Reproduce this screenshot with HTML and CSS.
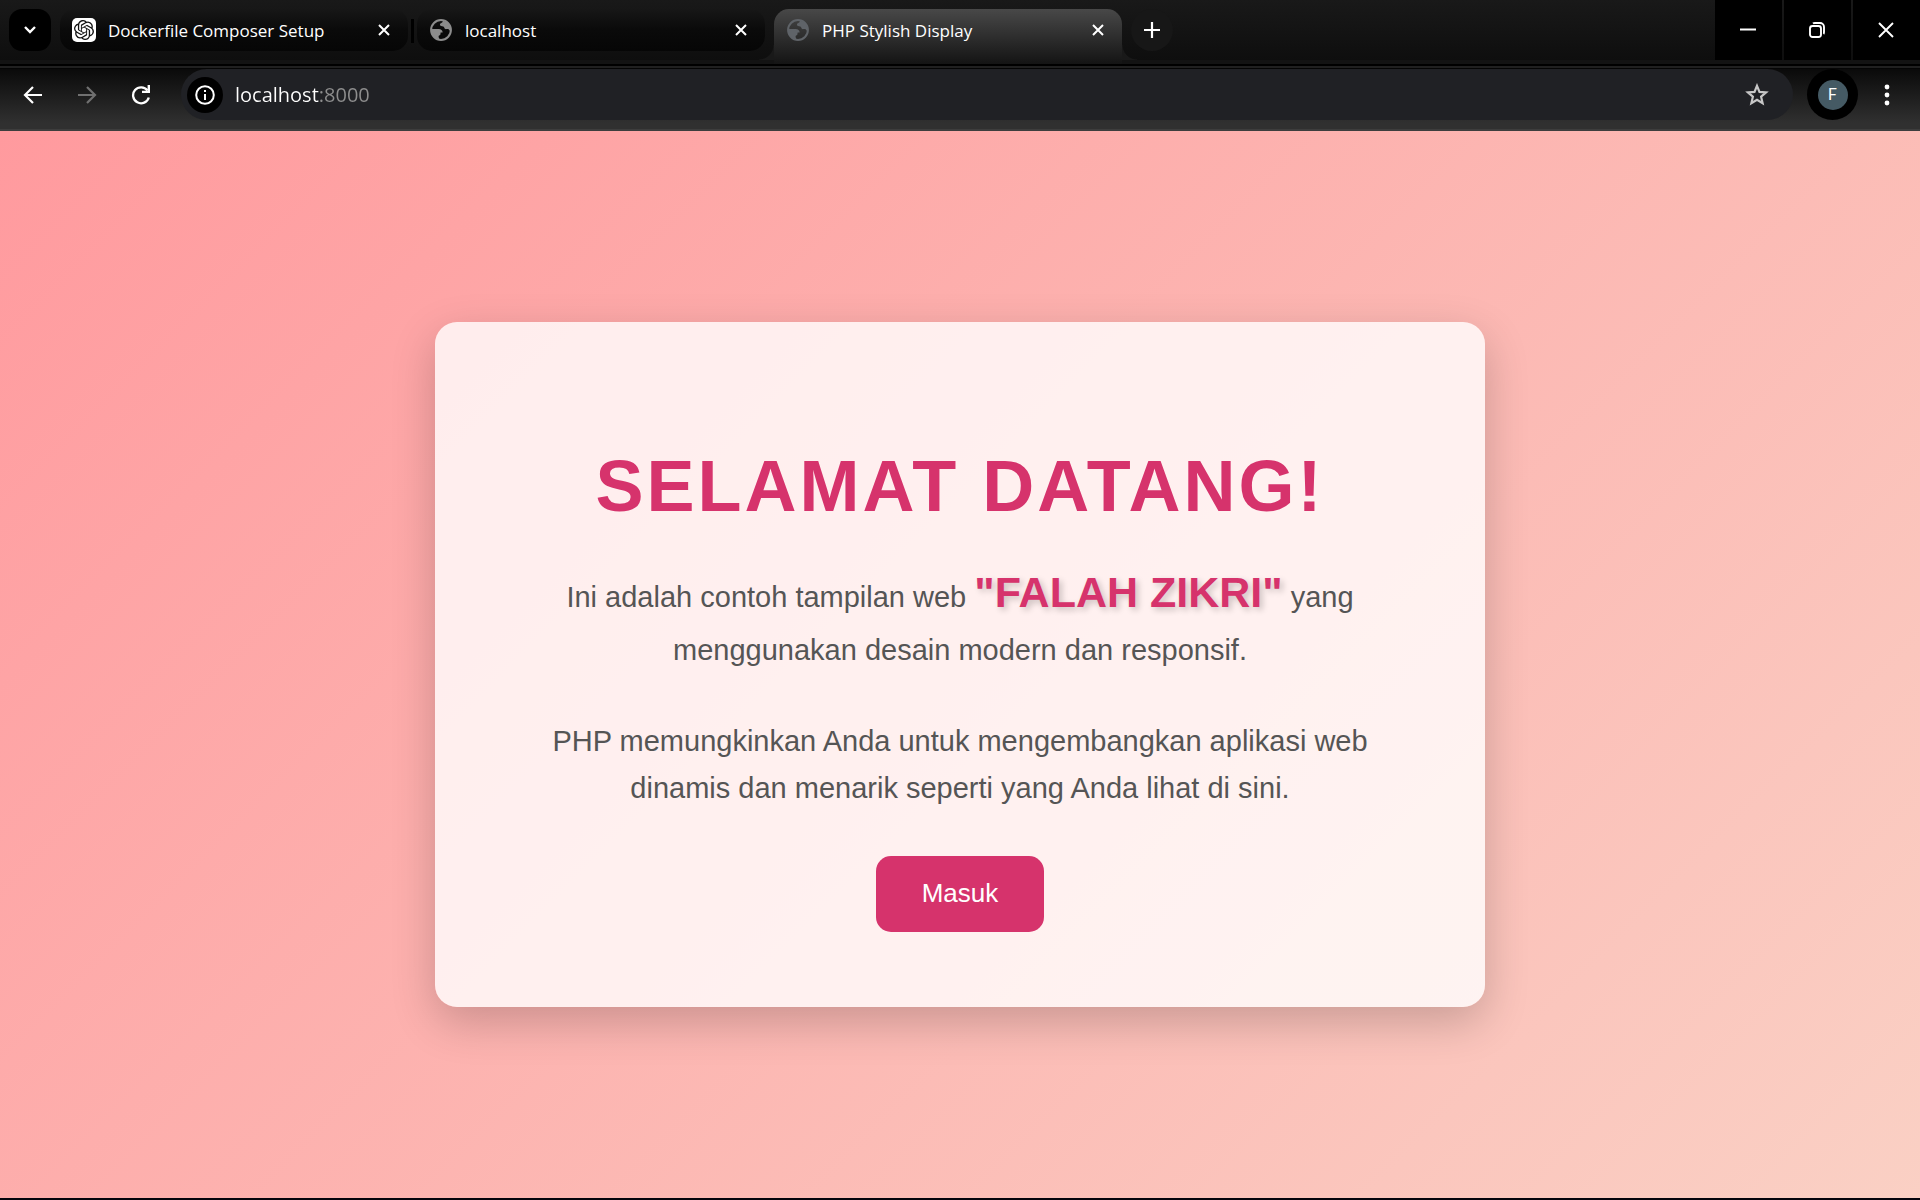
FILE: index.html
```html
<!DOCTYPE html>
<html lang="id">
<head>
<meta charset="utf-8">
<title>PHP Stylish Display</title>
<link rel="stylesheet" href="styles.css">
</head>
<body>
<svg hidden>
  <symbol id="icon-close" viewBox="0 0 12 12"><path d="M1 1l10 10M11 1L1 11" fill="none" stroke="currentColor" stroke-width="2"/></symbol>
  <symbol id="icon-globe" viewBox="0 0 24 24"><circle cx="12" cy="12" r="10.8" fill="none" stroke="currentColor" stroke-width="2.2"/><path fill="currentColor" d="M14.500 1.500L20 4.500l3 6v2.500c-1.500 0-2-.6-2.500-1.500-.8-1.200-2.500-.2-3.800-.5-1.400-.4-.8-2.200-2.200-2.700-1.600-.5-3.700-.5-3.700-2.300 0-1.700 2-1.500 2.700-2.500zM1 11h8.500c2.600 0 4.300 1.600 4.300 3.800h-2.200c-.3 1.200.2 2.400-1 2.900-1 .4-1.200.8-1.200 1.800l.8 3.200-5-2-3.600-4.200z"/></symbol>
</svg>

<div class="browser">
  <header class="tab-strip">
    <button class="tab-search" type="button" aria-label="Search tabs"><svg width="14" height="10" viewBox="0 0 14 10"><path d="M2 2l5 5 5-5" fill="none" stroke="currentColor" stroke-width="2.4"/></svg></button>
    <div class="tabs">
      <div class="tab">
        <span class="favicon favicon-white"><svg width="20" height="20" viewBox="0 0 24 24"><path fill="currentColor" d="M22.2819 9.8211a5.9847 5.9847 0 0 0-.5157-4.9108 6.0462 6.0462 0 0 0-6.5098-2.9A6.0651 6.0651 0 0 0 4.9807 4.1818a5.9847 5.9847 0 0 0-3.9977 2.9 6.0462 6.0462 0 0 0 .7427 7.0966 5.98 5.98 0 0 0 .511 4.9107 6.051 6.051 0 0 0 6.5146 2.9001A5.9847 5.9847 0 0 0 13.2599 24a6.0557 6.0557 0 0 0 5.7718-4.2058 5.9894 5.9894 0 0 0 3.9977-2.9001 6.0557 6.0557 0 0 0-.7475-7.0729zm-9.022 12.6081a4.4755 4.4755 0 0 1-2.8764-1.0408l.1419-.0804 4.7783-2.7582a.7948.7948 0 0 0 .3927-.6813v-6.7369l2.02 1.1686a.071.071 0 0 1 .038.052v5.5826a4.504 4.504 0 0 1-4.4945 4.4944zm-9.6607-4.1254a4.4708 4.4708 0 0 1-.5346-3.0137l.142.0852 4.783 2.7582a.7712.7712 0 0 0 .7806 0l5.8428-3.3685v2.3324a.0804.0804 0 0 1-.0332.0615L9.74 19.9502a4.4992 4.4992 0 0 1-6.1408-1.6464zM2.3408 7.8956a4.485 4.485 0 0 1 2.3655-1.9728V11.6a.7664.7664 0 0 0 .3879.6765l5.8144 3.3543-2.0201 1.1685a.0757.0757 0 0 1-.071 0l-4.8303-2.7865A4.504 4.504 0 0 1 2.3408 7.872zm16.5963 3.8558L13.1038 8.364 15.1192 7.2a.0757.0757 0 0 1 .071 0l4.8303 2.7913a4.4944 4.4944 0 0 1-.6765 8.1042v-5.6772a.79.79 0 0 0-.407-.667zm2.0107-3.0231l-.142-.0852-4.7735-2.7818a.7759.7759 0 0 0-.7854 0L9.409 9.2297V6.8974a.0662.0662 0 0 1 .0284-.0615l4.8303-2.7866a4.4992 4.4992 0 0 1 6.6802 4.66zM8.3065 12.863l-2.02-1.1638a.0804.0804 0 0 1-.038-.0567V6.0742a4.4992 4.4992 0 0 1 7.3757-3.4537l-.142.0805L8.704 5.459a.7948.7948 0 0 0-.3927.6813zm1.0976-2.3654l2.602-1.4998 2.6069 1.4998v2.9994l-2.5974 1.4997-2.6067-1.4997Z"/></svg></span>
        <span class="tab-title">Dockerfile Composer Setup</span>
        <button class="tab-close" type="button" aria-label="Close tab"><svg width="12" height="12"><use href="#icon-close"/></svg></button>
      </div>
      <span class="tab-divider"></span>
      <div class="tab">
        <span class="favicon"><svg width="22" height="22"><use href="#icon-globe"/></svg></span>
        <span class="tab-title">localhost</span>
        <button class="tab-close" type="button" aria-label="Close tab"><svg width="12" height="12"><use href="#icon-close"/></svg></button>
      </div>
      <div class="tab tab-active">
        <span class="favicon"><svg width="22" height="22"><use href="#icon-globe"/></svg></span>
        <span class="tab-title">PHP Stylish Display</span>
        <button class="tab-close" type="button" aria-label="Close tab"><svg width="12" height="12"><use href="#icon-close"/></svg></button>
      </div>
    </div>
    <button class="new-tab" type="button" aria-label="New tab"><svg width="16" height="16" viewBox="0 0 16 16"><path d="M8 0v16M0 8h16" stroke="currentColor" stroke-width="2.2"/></svg></button>
    <div class="window-controls">
      <button type="button" aria-label="Minimize"><svg width="16" height="16" viewBox="0 0 16 16"><path d="M0 7.500h16" stroke="currentColor" stroke-width="2"/></svg></button>
      <button type="button" aria-label="Restore"><svg width="16" height="16" viewBox="0 0 16 16"><g fill="none" stroke="currentColor" stroke-width="1.900"><rect x="1" y="4" width="11" height="11" rx="2.500"/><path d="M4 1.500Q4.500 1 6 1h5a4 4 0 0 1 4 4v5q0 1.500-.5 2"/></g></svg></button>
      <button type="button" aria-label="Close"><svg width="16" height="16" viewBox="0 0 16 16"><path d="M1 1l14 14M15 1L1 15" stroke="currentColor" stroke-width="1.900"/></svg></button>
    </div>
  </header>

  <nav class="toolbar">
    <div class="nav-buttons">
      <button type="button" aria-label="Back"><svg width="20" height="20" viewBox="0 0 20 20"><path d="M19 10H2M10 2l-8 8 8 8" fill="none" stroke="currentColor" stroke-width="2.200"/></svg></button>
      <button type="button" aria-label="Forward" disabled><svg width="20" height="20" viewBox="0 0 20 20"><path d="M1 10h17M10 2l8 8-8 8" fill="none" stroke="currentColor" stroke-width="2.200"/></svg></button>
      <button type="button" aria-label="Reload"><svg width="20" height="20" viewBox="0 0 20 20"><path d="M16.500 5.500A8 8 0 1 0 17.800 12.500" fill="none" stroke="currentColor" stroke-width="2.300"/><path d="M19 0v8h-8V5.800h5.600V0z" fill="currentColor"/></svg></button>
    </div>
    <div class="address-bar">
      <button class="site-info" type="button" aria-label="Site information"><svg width="20" height="20" viewBox="0 0 20 20"><circle cx="10" cy="10" r="8.800" fill="none" stroke="currentColor" stroke-width="2"/><path d="M10 9v6M10 5v2" stroke="currentColor" stroke-width="2"/></svg></button>
      <input class="address" type="text" value="localhost:8000" aria-label="Address" spellcheck="false">
      <button class="bookmark" type="button" aria-label="Bookmark this tab"><svg width="24" height="24" viewBox="0 0 24 24"><path d="M12 2.800l2.500 6.100 6.600.5-5 4.300 1.500 6.400-5.600-3.400-5.600 3.400 1.500-6.400-5-4.300 6.600-.5z" fill="none" stroke="currentColor" stroke-width="2.200"/></svg></button>
    </div>
    <button class="profile" type="button" aria-label="Profile"><span class="avatar">F</span></button>
    <button class="menu" type="button" aria-label="Menu"><svg width="6" height="22" viewBox="0 0 6 22"><g fill="currentColor"><circle cx="3" cy="3" r="2.400"/><circle cx="3" cy="11" r="2.400"/><circle cx="3" cy="19" r="2.400"/></g></svg></button>
  </nav>

  <main class="page">
    <section class="card">
      <h1>SELAMAT DATANG!</h1>
      <p>Ini adalah contoh tampilan web <span class="highlight">"FALAH ZIKRI"</span> yang menggunakan desain modern dan responsif.</p>
      <p>PHP memungkinkan Anda untuk mengembangkan aplikasi web dinamis dan menarik seperti yang Anda lihat di sini.</p>
      <a class="button" href="#">Masuk</a>
    </section>
  </main>
</div>
</body>
</html>
```
FILE: styles.css
```css
* {
  box-sizing: border-box;
}

body {
  margin: 0;
  font-family: "Liberation Sans", Arial, sans-serif;
}

button {
  display: flex;
  align-items: center;
  justify-content: center;
  flex: none;
  margin: 0;
  padding: 0;
  border: 0;
  background: none;
  color: #fff;
}

svg {
  display: block;
}

svg[hidden] {
  display: none;
}

.browser {
  display: flex;
  flex-direction: column;
  min-height: 100vh;
  border-bottom: 2px solid #04040c;
  font-family: "Open Sans", sans-serif;
}

/* Tab strip */
.tab-strip {
  display: flex;
  align-items: flex-start;
  gap: 9px;
  height: 69px;
  padding-left: 9px;
  background:
    linear-gradient(#000 0 2px, #202020 2px 4px, #050505 4px) 0 100% / 100% 5px no-repeat,
    linear-gradient(#191919, #0e0e0e 60px, #131313 60px);
}

.tab-search,
.new-tab {
  width: 42px;
  height: 42px;
  margin-top: 9px;
  border-radius: 13px;
  background: #000;
}

.new-tab {
  border-radius: 50%;
  background: #171717;
}

.tabs {
  display: flex;
  gap: 3px;
  flex: 0 1 1062px;
  min-width: 0;
  padding-top: 9px;
}

.tab {
  display: flex;
  align-items: center;
  gap: 12px;
  flex: 1 1 0;
  min-width: 0;
  height: 42px;
  padding: 0 18px 0 12px;
  border-radius: 15px;
  background: linear-gradient(#171717, #0a0a0a 50%, #060606);
  color: #fff;
}

.tab-divider {
  width: 3px;
  height: 24px;
  margin-top: 10px;
  background: #000;
}

.tab-active {
  position: relative;
  height: 55px;
  margin-left: 6px;
  padding-bottom: 13px;
  border-radius: 15px 15px 0 0;
  background: linear-gradient(#484848, #141414);
}

.tab-active::before,
.tab-active::after {
  content: "";
  position: absolute;
  bottom: 4px;
  width: 15px;
  height: 15px;
}

.tab-active::before {
  right: 100%;
  background: radial-gradient(circle at 0 0, transparent 14px, #191919 15px);
}

.tab-active::after {
  left: 100%;
  background: radial-gradient(circle at 100% 0, transparent 14px, #191919 15px);
}

.favicon {
  display: flex;
  align-items: center;
  justify-content: center;
  flex: none;
  width: 24px;
  height: 24px;
  color: #8c8c8c;
}

.favicon-white {
  border-radius: 5px;
  background: #fff;
  color: #111;
}

.tab-active .favicon {
  color: #5f6368;
}

.tab-title {
  flex: 1;
  overflow: hidden;
  padding-top: 2px;
  font-size: 17px;
  line-height: 24px;
  white-space: nowrap;
}

.window-controls {
  display: flex;
  gap: 2px;
  margin-left: auto;
}

.window-controls button {
  width: 67px;
  height: 60px;
  padding-right: 2px;
  background: #000;
}

/* Toolbar */
.toolbar {
  display: flex;
  align-items: flex-start;
  height: 62px;
  padding-right: 30px;
  border-bottom: 2px solid #3d3d3d;
  background: linear-gradient(#0a0a0a, #303030 90%);
}

.nav-buttons {
  display: flex;
  gap: 34px;
  padding: 16px 30px 0 23px;
}

.nav-buttons button:disabled {
  color: #707070;
}

.address-bar {
  display: flex;
  align-items: center;
  flex: 1;
  height: 51px;
  padding: 0 24px 0 6px;
  border-radius: 26px;
  background: #202125;
}

.site-info {
  width: 36px;
  height: 36px;
  border-radius: 50%;
  background: #000;
}

.address {
  flex: 1;
  min-width: 0;
  margin: 0 12px;
  padding: 0;
  border: 0;
  outline: 0;
  font: 20px/30px "Open Sans", sans-serif;
  color: transparent;
  background: linear-gradient(90deg, #fff 85px, #8e8e8e 85px);
  -webkit-background-clip: text;
  background-clip: text;
}

.bookmark {
  color: #c7c7c7;
}

.profile {
  width: 51px;
  height: 51px;
  margin-left: 14px;
  border-radius: 50%;
  background: #000;
}

.avatar {
  width: 30px;
  height: 30px;
  border-radius: 50%;
  background: #455a64;
  font: 16px/30px Roboto, sans-serif;
  text-align: center;
}

.menu {
  width: 6px;
  height: 51px;
  margin-left: 26px;
}

/* Page */
.page {
  display: flex;
  align-items: center;
  justify-content: center;
  flex: 1;
  background: linear-gradient(135deg, #ff9a9e, #fad0c4);
  font-family: "Liberation Sans", Arial, sans-serif;
}

.card {
  width: 100%;
  max-width: 1050px;
  padding: 75px;
  border-radius: 22px;
  background: rgba(255, 255, 255, 0.8);
  box-shadow: 0 15px 45px rgba(0, 0, 0, 0.2);
  text-align: center;
}

.card h1 {
  margin: 48px 0 30px;
  color: #d6336c;
  font-size: 72px;
  line-height: 82px;
  letter-spacing: 3px;
}

.card p {
  margin: 0 0 45px;
  color: #555;
  font-size: 29px;
  line-height: 1.6;
}

.highlight {
  color: #d6336c;
  font-size: 43px;
  line-height: 70px;
  font-weight: bold;
  text-shadow: 3px 3px 6px rgba(0, 0, 0, 0.2);
}

.button {
  display: inline-block;
  padding: 16px 46px 18px;
  border-radius: 15px;
  background: #d6336c;
  color: #fff;
  font-size: 26px;
  line-height: 42px;
  text-decoration: none;
  vertical-align: top;
}
```
